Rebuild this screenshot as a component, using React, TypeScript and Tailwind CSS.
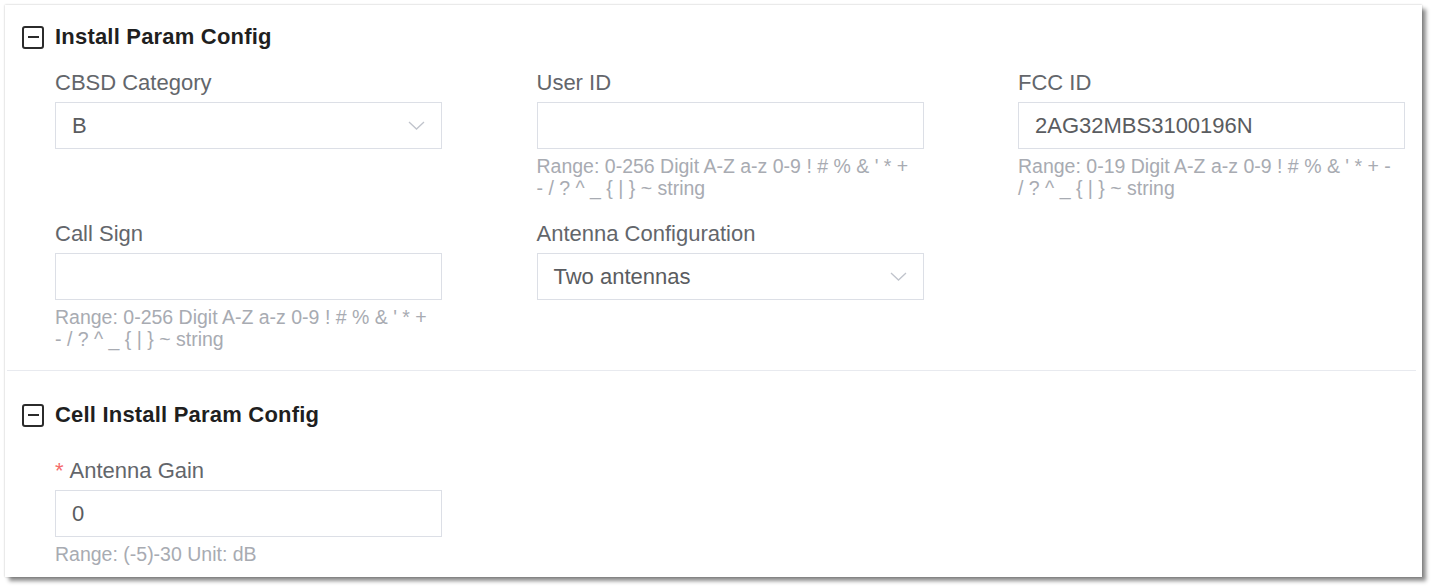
import { ReactNode } from 'react'

const font = { fontFamily: '"Liberation Sans", Arial, sans-serif' }

function MinusBox() {
  return (
    <div className="w-[22px] h-[23px] rounded-[3px] border-2 border-[#2b2b2b] flex items-center justify-center shrink-0">
      <div className="w-[11px] h-[2px] bg-[#2b2b2b]" />
    </div>
  )
}

function SectionHeader({ title }: { title: string }) {
  return (
    <div className="flex items-center gap-[11px] pl-[17px]">
      <MinusBox />
      <span className="text-[22px] leading-[26px] font-bold text-[#1f1f1f] tracking-[0.2px]">{title}</span>
    </div>
  )
}

function Chevron() {
  return (
    <svg width="17" height="9" viewBox="0 0 17 9" fill="none">
      <polyline points="1,1 8.5,8 16,1" stroke="#c0c4cc" strokeWidth="1.3" />
    </svg>
  )
}

function Field({ label, value, select, help, required }: { label: string; value?: string; select?: boolean; help?: ReactNode; required?: boolean }) {
  return (
    <div className="flex flex-col">
      <div className="text-[22px] leading-[26px] text-[#63666b]">
        {required && <span className="text-[#f56c6c] mr-[6px]">*</span>}
        {label}
      </div>
      <div className="mt-[6px] h-[47px] border border-[#dcdfe6] bg-white flex items-center justify-between pl-4 pr-[16px]">
        <span className="text-[22px] text-[#5a5c60]">{value}</span>
        {select && <Chevron />}
      </div>
      {help && (
        <div className="mt-[6px] max-w-[380px] text-[19.5px] leading-[22px] text-[#a8abb2]">{help}</div>
      )}
    </div>
  )
}

const charHelp = (n: string) => `Range: 0-${n} Digit A-Z a-z 0-9 ! # % & ' * + - / ? ^ _ { | } ~ string`

export default function App() {
  return (
    <div className="w-[1431px] h-[586px] bg-white pt-[5px] pl-[5px]" style={font}>
      <div className="w-[1417px] h-[572px] bg-white flex flex-col shadow-[0_0_2px_rgba(0,0,0,0.25),4px_4px_4px_rgba(0,0,0,0.45)]">
        {/* Install Param Config */}
        <div className="pt-[19px] pb-[20px]">
          <SectionHeader title="Install Param Config" />
          <div className="mt-[20px] pl-[50px] grid grid-cols-[387px_387px_387px] gap-x-[94.5px] gap-y-[22px] items-start">
            <Field label="CBSD Category" value="B" select />
            <Field label="User ID" help={charHelp('256')} />
            <Field label="FCC ID" value="2AG32MBS3100196N" help={charHelp('19')} />
            <Field label="Call Sign" help={charHelp('256')} />
            <Field label="Antenna Configuration" value="Two antennas" select />
          </div>
        </div>

        <div className="ml-[2px] mr-[6px] h-px bg-[#e8eaef]" />

        {/* Cell Install Param Config */}
        <div className="pt-[31px]">
          <SectionHeader title="Cell Install Param Config" />
          <div className="mt-[30px] pl-[50px] grid grid-cols-[387px_387px_387px] gap-x-[94.5px]">
            <Field label="Antenna Gain" required value="0" help="Range: (-5)-30 Unit: dB" />
          </div>
        </div>
      </div>
    </div>
  )
}
